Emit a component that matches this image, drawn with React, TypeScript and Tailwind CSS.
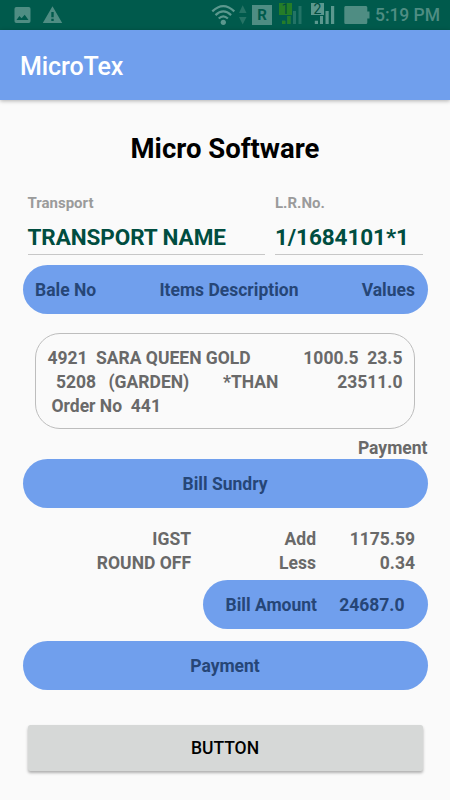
import type { ReactNode } from 'react';

interface SundryLine {
  name: string;
  type: 'Add' | 'Less';
  amount: string;
}

const sundryLines: SundryLine[] = [
  { name: 'IGST', type: 'Add', amount: '1175.59' },
  { name: 'ROUND OFF', type: 'Less', amount: '0.34' },
];

function StatusBar() {
  return (
    <div className="flex h-[30px] items-center bg-[#005a4c]">
      <svg className="h-[30px] w-[375px] shrink-0" viewBox="0 0 375 30">
        {/* Picture notification */}
        <path
          fill="#4f8d83"
          fillRule="evenodd"
          d="M16.300 7H28.800Q30.500 7 30.500 8.700V21.300Q30.500 23 28.800 23H16.300Q14.500 23 14.500 21.300V8.700Q14.500 7 16.300 7ZM16.500 20H28.500L24.700 14.700L21.600 18.300L19.400 16Z"
        />
        {/* Warning */}
        <path
          fill="#4f8d83"
          fillRule="evenodd"
          d="M52.500 6.200L62.200 23H42.800ZM51.300 12V17.300H53.700V12ZM51.300 18.700V21H53.700V18.700Z"
        />
        {/* Wifi */}
        <g fill="none" stroke="#5b988e" strokeWidth="2.200">
          <path d="M212.300 11.400Q223.300 .8 234.300 11.400" />
          <path d="M215.500 15.100Q223.300 7.600 231.100 15.100" />
          <path d="M218.700 18.500Q223.300 14.200 227.900 18.500" />
        </g>
        <circle cx="223.300" cy="22.300" r="2.600" fill="#5b988e" />
        <path fill="#257365" d="M242.700 5.300L246.500 13H239ZM239 17H246.500L242.700 24.500Z" />
        {/* Roaming */}
        <path fill="#4f8d83" d="M252 5H272V25H252Z" />
        <text x="262" y="20.300" textAnchor="middle" fill="#005a4c" className="font-['Roboto',sans-serif] text-[15px] font-bold">
          R
        </text>
        {/* SIM 1 */}
        <path fill="#257d28" d="M279 3H292V15H279Z" />
        <path fill="#237366" d="M282 20.700H285.300V24H282ZM287.300 16H290.500V24H287.300ZM293 11H296V24H293ZM298.500 6H301.500V24H298.500Z" />
        <path fill="#257d28" d="M282 20.700H285.300V24H282ZM287.300 16H290.500V24H287.300Z" />
        <text x="285.500" y="13.800" textAnchor="middle" fill="#004d3f" className="font-['Roboto',sans-serif] text-[14px] font-normal">
          1
        </text>
        {/* SIM 2 */}
        <path
          fill="#5b988e"
          d="M311 3H324V15H311ZM314.800 20.800H318V24H314.800ZM320 16H323V24H320ZM325.500 11H328.700V24H325.500ZM331 6H334.200V24H331Z"
        />
        <text x="317.500" y="14" textAnchor="middle" fill="#004d3f" className="font-['Roboto',sans-serif] text-[14px] font-normal">
          2
        </text>
        {/* Battery */}
        <path fill="#4f8d83" d="M345.500 6H366Q367.300 6 367.300 7.500V11.500H369.500V18.500H367.300V22.500Q367.300 24 366 24H345.500Q344.300 24 344.300 22.500V7.500Q344.300 6 345.500 6Z" />
      </svg>
      <span className="text-[17.5px] leading-[30px] font-medium tracking-[-0.05px] whitespace-nowrap text-[#4f8d83]">5:19 PM</span>
    </div>
  );
}

function Field({ label, value, className }: { label: string; value: string; className: string }) {
  return (
    <div className={`h-[62px] border-b border-[#c7c7c7] ${className}`}>
      <div className="text-[15px] leading-[20px] font-bold text-[#9b9b9b]">{label}</div>
      <div className="mt-[11px] text-[22.5px] leading-[27px] font-bold tracking-[-0.08px] whitespace-nowrap text-[#004d40]">
        {value}
      </div>
    </div>
  );
}

function Pill({ children, className = '' }: { children: ReactNode; className?: string }) {
  return (
    <div className={`flex h-[49px] items-center rounded-[24.5px] bg-[#709fed] pt-[2px] text-[#264677] ${className}`}>
      {children}
    </div>
  );
}

export default function App() {
  return (
    <div className="h-[800px] w-[450px] overflow-hidden bg-[#fafafa] font-['Roboto',sans-serif] text-[17.5px] leading-[23.75px] font-bold text-[#696969]">
      <StatusBar />
      <header className="flex h-[70px] items-center bg-[#709fed] pl-5 shadow-[0_1px_4px_rgba(0,0,0,0.3)]">
        <h1 className="mt-[3px] text-[25px] leading-[30px] font-medium tracking-[-0.1px] text-white">MicroTex</h1>
      </header>

      <main className="flex flex-col px-[22.5px]">
        <h2 className="mt-[33px] text-center text-[27.5px] leading-[32px] text-black">Micro Software</h2>

        <div className="mt-[28px] flex gap-[10px] px-[5px]">
          <Field label="Transport" value="TRANSPORT NAME" className="w-[237.5px]" />
          <Field label="L.R.No." value="1/1684101*1" className="w-[147.5px]" />
        </div>

        <Pill className="mt-[10px] justify-between px-[12.5px]">
          <span>Bale No</span>
          <span>Items Description</span>
          <span>Values</span>
        </Pill>

        {/* Bale entry */}
        <div className="mx-[12.5px] mt-[19px] h-[96px] rounded-[25px] border border-[#bdbdbd] px-[11.5px] pt-[13px] whitespace-pre">
          <div className="flex">
            <span className="w-[48.5px]">4921</span>
            <span>SARA QUEEN GOLD</span>
            <span className="ml-auto">{'1000.5  23.5'}</span>
          </div>
          <div className="flex pl-[8.5px]">
            <span className="w-[52.5px]">5208</span>
            <span className="w-[114.500px]">(GARDEN)</span>
            <span>*THAN</span>
            <span className="ml-auto">23511.0</span>
          </div>
          <div className="pl-[4px]">{'Order No  441'}</div>
        </div>

        <div className="mt-[8px] h-[22px] text-right">Payment</div>
        <Pill className="justify-center">Bill Sundry</Pill>

        <div className="mt-[20px] pr-[12.5px]">
          {sundryLines.map((line) => (
            <div key={line.name} className="flex text-right">
              <span className="w-[168.5px]">{line.name}</span>
              <span className="w-[125px]">{line.type}</span>
              <span className="flex-1">{line.amount}</span>
            </div>
          ))}
        </div>

        <Pill className="mt-[4.5px] w-[225px] justify-between self-end pr-[23px] pl-[23px]">
          <span>Bill Amount</span>
          <span>24687.0</span>
        </Pill>
        <Pill className="mt-[12px] justify-center">Payment</Pill>

        <button className="mx-[5px] mt-[35px] h-[45.5px] rounded-[2.5px] bg-[#d6d8d7] pt-[2px] font-medium text-black shadow-[0_2px_3px_rgba(0,0,0,0.3)]">
          BUTTON
        </button>
      </main>
    </div>
  );
}
